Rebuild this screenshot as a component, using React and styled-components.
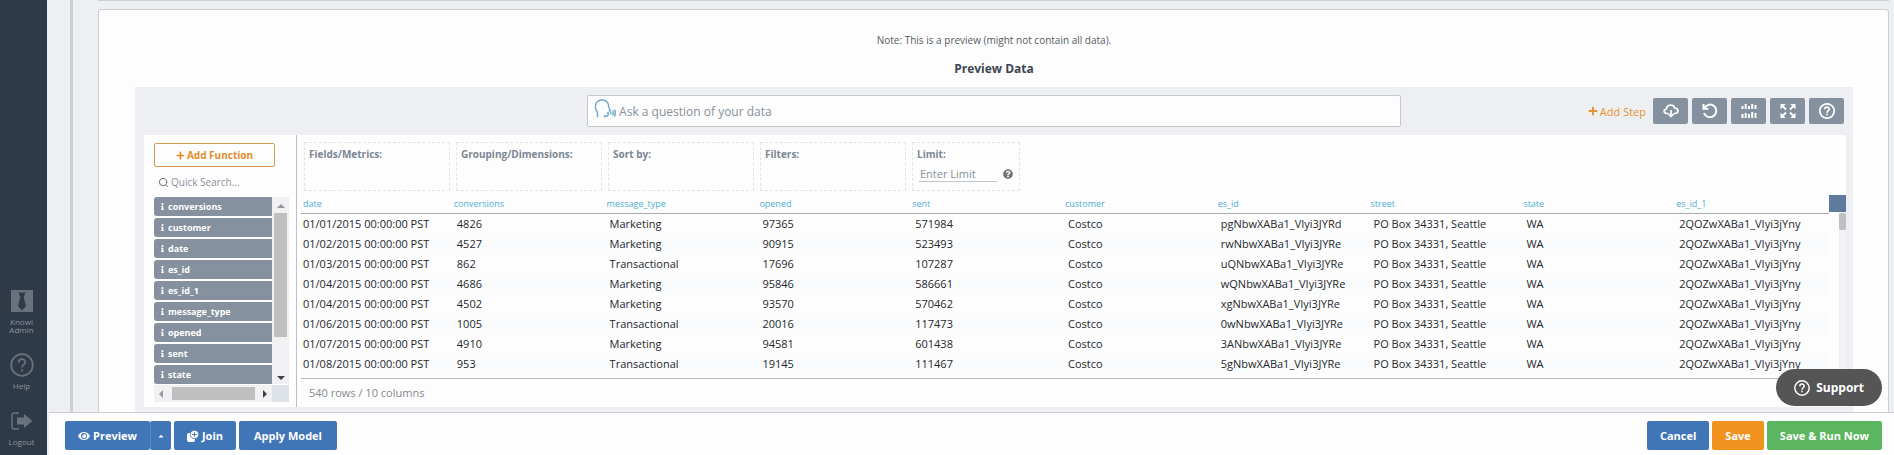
import React from "react";
import styled, { createGlobalStyle, css } from "styled-components";
import {
  FaPlus,
  FaEye,
  FaCaretUp,
  FaInfo,
  FaQuestionCircle,
} from "react-icons/fa";
import { Search } from "lucide-react";

const functions = [
  "conversions",
  "customer",
  "date",
  "es_id",
  "es_id_1",
  "message_type",
  "opened",
  "sent",
  "state",
];

const dropZones = [
  "Fields/Metrics:",
  "Grouping/Dimensions:",
  "Sort by:",
  "Filters:",
];

const columns = [
  "date",
  "conversions",
  "message_type",
  "opened",
  "sent",
  "customer",
  "es_id",
  "street",
  "state",
  "es_id_1",
];

const row = (day, conversions, type, opened, sent, id) => [
  `01/${day}/2015 00:00:00 PST`,
  conversions,
  type,
  opened,
  sent,
  "Costco",
  id,
  "PO Box 34331, Seattle",
  "WA",
  "2QOZwXABa1_VIyi3jYny",
];

const rows = [
  row("01", 4826, "Marketing", 97365, 571984, "pgNbwXABa1_VIyi3JYRd"),
  row("02", 4527, "Marketing", 90915, 523493, "rwNbwXABa1_VIyi3JYRe"),
  row("03", 862, "Transactional", 17696, 107287, "uQNbwXABa1_VIyi3JYRe"),
  row("04", 4686, "Marketing", 95846, 586661, "wQNbwXABa1_VIyi3JYRe"),
  row("04", 4502, "Marketing", 93570, 570462, "xgNbwXABa1_VIyi3JYRe"),
  row("06", 1005, "Transactional", 20016, 117473, "0wNbwXABa1_VIyi3JYRe"),
  row("07", 4910, "Marketing", 94581, 601438, "3ANbwXABa1_VIyi3JYRe"),
  row("08", 953, "Transactional", 19145, 111467, "5gNbwXABa1_VIyi3JYRe"),
];

const TieIcon = () => (
  <svg width="22" height="24" viewBox="0 0 22 24">
    <path d="M0 1h22v22H0z" fill="currentColor" />
    <path d="M7.500 3.500h7l-1.800 4.500 2.300 9-4 4.500-4-4.500L9.300 8z" fill="#2f3a48" />
  </svg>
);

const HelpIcon = ({ size = 24, weight = 1.8 }) => (
  <svg
    width={size}
    height={size}
    viewBox="0 0 24 24"
    fill="none"
    stroke="currentColor"
    strokeWidth={weight}
  >
    <circle cx="12" cy="12" r="10.800" />
    <path d="M8.700 9.500c0-4.500 6.600-4.300 6.600-.4 0 2.500-3.300 2.700-3.300 5.400" />
    <path d="M12 16.300v2.200" />
  </svg>
);

const LogoutIcon = () => (
  <svg width="22" height="24" viewBox="0 -3 22 24">
    <path
      d="M8 1H3Q1 1 1 3v12q0 2 2 2h5"
      fill="none"
      stroke="currentColor"
      strokeWidth="1.500"
    />
    <path d="M6 5.500h7V2l8.500 7L13 16v-3.500H6z" fill="currentColor" />
  </svg>
);

const SpeakIcon = () => (
  <svg
    width="22"
    height="20"
    viewBox="0 0 22 20"
    fill="none"
    stroke="#6fa8cf"
    strokeWidth="1.400"
  >
    <path d="M3.500 18.500v-5C-.5 8 1.500 1 8 1c5 0 7 3.500 6.500 7l1.800 3.500-1.600.5M10.500 18.500v-1.500h3.200l.8-3h-1.700" />
    <path d="M16.800 12.500v3M18.700 11.500q1 2.500 0 5M20.600 10.500q1.400 3.500 0 7" />
  </svg>
);

const CloudIcon = () => (
  <svg
    width="16"
    height="14"
    viewBox="0 0 16 14"
    fill="none"
    stroke="#fff"
    strokeWidth="1.700"
  >
    <path d="M5.500 9.500H4C.5 9.500.2 5.500 3.400 5 3.600.3 10.800-.2 11.600 4c4.200.2 4.500 5.500.4 5.500h-1.500M8 6v6M5.500 10L8 12.600l2.500-2.600" />
  </svg>
);

const UndoIcon = () => (
  <svg
    width="16"
    height="16"
    viewBox="0 0 16 16"
    fill="none"
    stroke="#fff"
    strokeWidth="2"
  >
    <path d="M2.500 4.700A6.300 6.300 0 1 1 2 10" />
    <path d="M1.500 1v4.800h4.800" />
  </svg>
);

const BarsIcon = () => (
  <svg width="16" height="16" viewBox="0 0 16 16" stroke="#fff" strokeWidth="2">
    <path d="M1.500 3V6M4.700 1v5M8 3v3M11.200 1v5M14.500 2v4M1.500 11V15M4.700 10v5M8 11v4M11.200 9v6M14.500 10v5" />
  </svg>
);

const ExpandIcon = () => (
  <svg width="16" height="16" viewBox="0 0 16 16">
    <path
      d="M.5 1h5.200L.5 6.200zM15.500 1v5.200L10.300 1zM.5 15V9.800L5.700 15zM15.500 15h-5.200l5.200-5.200z"
      fill="#fff"
    />
    <path
      d="M2 2.500l4 4M14 2.500l-4 4M2 13.500l4-4M14 13.500l-4-4"
      stroke="#fff"
      strokeWidth="1.800"
    />
  </svg>
);

const JoinIcon = () => (
  <svg width="12" height="12" viewBox="0 0 12 12">
    <rect y="3" width="8" height="9" rx="2" fill="#fff" />
    <circle
      cx="7.500"
      cy="4.500"
      r="4.200"
      fill="#fff"
      stroke="#4076b8"
      strokeWidth=".8"
    />
    <path d="M7.500 2.300v4.400M5.300 4.500h4.400" stroke="#4076b8" />
  </svg>
);

const App = () => {
  return (
    <>
      <GlobalStyle />
      <Shell>
        <Sidebar>
          <SideLink href="#admin">
            <TieIcon />
            <span>
              Knowi
              <br />
              Admin
            </span>
          </SideLink>
          <SideLink href="#help">
            <HelpIcon />
            <span>Help</span>
          </SideLink>
          <SideLink href="#logout">
            <LogoutIcon />
            <span>Logout</span>
          </SideLink>
        </Sidebar>

        <Page>
          <Content>
            <PreviousEdge />
            <Card>
              <Note>Note: This is a preview (might not contain all data).</Note>
              <Title>Preview Data</Title>
              <Widget>
                <Toolbar>
                  <SearchBox>
                    <SpeakIcon />
                    <input
                      type="text"
                      aria-label="Ask a question of your data"
                      placeholder="Ask a question of your data"
                    />
                  </SearchBox>
                  <Actions>
                    <AddStep>
                      <FaPlus size={10} /> Add Step
                    </AddStep>
                    <IconButton aria-label="Download">
                      <CloudIcon />
                    </IconButton>
                    <IconButton aria-label="Reset">
                      <UndoIcon />
                    </IconButton>
                    <IconButton aria-label="Charts">
                      <BarsIcon />
                    </IconButton>
                    <IconButton aria-label="Full screen">
                      <ExpandIcon />
                    </IconButton>
                    <IconButton aria-label="Help">
                      <HelpIcon size={16} weight={2.5} />
                    </IconButton>
                  </Actions>
                </Toolbar>

                <Workspace>
                  <FunctionPanel>
                    <AddFunction>
                      <FaPlus size={9} /> Add Function
                    </AddFunction>
                    <QuickSearch>
                      <Search size={11} />
                      <input
                        type="text"
                        aria-label="Quick Search"
                        placeholder="Quick Search..."
                      />
                    </QuickSearch>
                    <ListFrame>
                      <FunctionList>
                        {functions.map((name) => (
                          <li key={name}>
                            <FaInfo size={7} />
                            {name}
                          </li>
                        ))}
                      </FunctionList>
                      <ScrollY>
                        <Arrow $dir="up" />
                        <i />
                        <Arrow $dir="down" />
                      </ScrollY>
                      <ScrollX>
                        <Arrow $dir="left" />
                        <i />
                        <Arrow $dir="right" />
                      </ScrollX>
                      <Corner />
                    </ListFrame>
                  </FunctionPanel>

                  <DataPanel>
                    <Builder>
                      {dropZones.map((zone) => (
                        <Zone key={zone}>{zone}</Zone>
                      ))}
                      <Zone $narrow>
                        <label htmlFor="limit">Limit:</label>
                        <LimitRow>
                          <input
                            id="limit"
                            type="text"
                            placeholder="Enter Limit"
                          />
                          <FaQuestionCircle size={10} />
                        </LimitRow>
                      </Zone>
                    </Builder>

                    <Grid>
                      <TableWrap>
                        <Table>
                          <thead>
                            <tr>
                              {columns.map((name) => (
                                <th key={name}>{name}</th>
                              ))}
                            </tr>
                          </thead>
                          <tbody>
                            {rows.map((cells, i) => (
                              <tr key={i}>
                                {cells.map((cell, j) => (
                                  <td key={j}>{cell}</td>
                                ))}
                              </tr>
                            ))}
                          </tbody>
                        </Table>
                      </TableWrap>
                      <GridScroll>
                        <button aria-label="Choose columns" />
                        <i />
                      </GridScroll>
                    </Grid>
                    <Count>540 rows / 10 columns</Count>
                  </DataPanel>
                </Workspace>
              </Widget>
            </Card>
            <Support>
              <HelpIcon size={16} weight={2.2} /> Support
            </Support>
          </Content>

          <Footer>
            <SplitButton>
              <Button>
                <FaEye size={12} /> Preview
              </Button>
              <Button $caret aria-label="More preview options">
                <FaCaretUp size={8} />
              </Button>
            </SplitButton>
            <Button>
              <JoinIcon /> Join
            </Button>
            <Button $wide>Apply Model</Button>
            <Spacer />
            <Button>Cancel</Button>
            <Button $color="#f1921f">Save</Button>
            <Button $color="#5cb660">Save &amp; Run Now</Button>
          </Footer>
        </Page>
      </Shell>
    </>
  );
};

export default App;

const GlobalStyle = createGlobalStyle`
  * {
    box-sizing: border-box;
  }
  body {
    margin: 0;
    background: #eeeff3;
    font-family: "Open Sans", "Noto Sans", sans-serif;
    font-size: 11px;
  }
  button,
  input {
    font: inherit;
    margin: 0;
    padding: 0;
    border: none;
    background: none;
  }
  input {
    outline: none;
    min-width: 0;
  }
  button {
    cursor: pointer;
  }
  input::placeholder {
    color: #88909a;
    opacity: 1;
  }
`;

const Shell = styled.div`
  display: flex;
  height: 100vh;
`;

const Sidebar = styled.nav`
  flex: none;
  width: 47px;
  padding: 0 4px 9px 0;
  display: flex;
  flex-direction: column;
  justify-content: flex-end;
  gap: 19px;
  background: #2f3a48;
`;

const SideLink = styled.a`
  display: flex;
  flex-direction: column;
  align-items: center;
  gap: 5px;
  color: #69727c;
  font-size: 8px;
  line-height: 8px;
  text-align: center;
  text-decoration: none;
  span {
    color: #8b939c;
  }
`;

const Page = styled.div`
  flex: 1;
  min-width: 0;
  display: flex;
  flex-direction: column;
`;

const Content = styled.main`
  position: relative;
  flex: 1;
  min-height: 0;
  margin-left: 23px;
  padding: 0 5px 0 25px;
  border-left: 3px solid #cccfd5;
  overflow: hidden;
  display: flex;
  flex-direction: column;
  gap: 8px;
`;

const PreviousEdge = styled.div`
  height: 1px;
  background: #cdcfd5;
`;

const Card = styled.section`
  flex: 1;
  min-width: 0;
  padding: 20px 35px 0 36px;
  display: flex;
  flex-direction: column;
  background: #fdfdfd;
  border: 1px solid #cdcfd5;
  border-bottom: none;
  border-radius: 3px 3px 0 0;
`;

const Note = styled.p`
  margin: 0;
  color: #555b63;
  font-size: 10px;
  line-height: 20px;
  text-align: center;
`;

const Title = styled.h2`
  margin: 9px 0 8px;
  color: #3d4652;
  font-size: 12px;
  line-height: 20px;
  text-align: center;
`;

const Widget = styled.div`
  flex: 1;
  display: flex;
  flex-direction: column;
  background: #edeff3;
`;

const Toolbar = styled.div`
  height: 48px;
  display: grid;
  grid-template-columns: minmax(0, 1.8fr) minmax(0, 1fr);
  padding-left: calc(100% * 10 / 38);
  align-items: center;
`;

const SearchBox = styled.div`
  height: 32px;
  padding: 0 6px;
  display: flex;
  align-items: center;
  gap: 3px;
  background: #fdfdfd;
  border: 1px solid #c2c8ce;
  border-radius: 2px;
  font-size: 12px;
  svg {
    margin-bottom: 4px;
  }
  input {
    flex: 1;
  }
`;

const Actions = styled.div`
  display: flex;
  align-items: center;
  justify-content: flex-end;
  gap: 4px;
  padding-right: 9px;
`;

const AddStep = styled.button`
  display: flex;
  align-items: center;
  gap: 2px;
  margin-right: 3px;
  color: #e8922f;
  white-space: nowrap;
`;

const IconButton = styled.button`
  width: 35px;
  height: 26px;
  display: flex;
  align-items: center;
  justify-content: center;
  color: #fff;
  background: #85919e;
  border-radius: 2px;
`;

const Workspace = styled.div`
  display: flex;
  margin: 0 7px 0 9px;
  background: #fdfdfd;
`;

const FunctionPanel = styled.aside`
  flex: none;
  width: 153px;
  padding: 8px 7px 4px 10px;
  border-right: 1px solid #bcbfc4;
`;

const AddFunction = styled.button`
  display: flex;
  align-items: center;
  justify-content: center;
  gap: 2px;
  width: 121px;
  height: 24px;
  color: #e08d2e;
  font-size: 10px;
  font-weight: 700;
  border: 1px solid #d39a55;
  border-radius: 2px;
`;

const QuickSearch = styled.div`
  display: flex;
  align-items: center;
  gap: 2px;
  height: 30px;
  padding-left: 4px;
  color: #5e6872;
  font-size: 10px;
  input {
    width: 100px;
  }
`;

const ListFrame = styled.div`
  display: grid;
  grid-template-columns: 118px 17px;
  grid-template-rows: auto 17px;
  row-gap: 1px;
`;

const FunctionList = styled.ul`
  margin: 0;
  padding: 0;
  list-style: none;
  display: flex;
  flex-direction: column;
  gap: 2px;
  li {
    display: flex;
    align-items: center;
    gap: 2px;
    height: 19px;
    padding: 0 0 1px 5px;
    color: #fff;
    font-size: 9px;
    font-weight: 700;
    background: #85919e;
    border-radius: 3px 0 0 3px;
  }
`;

const ScrollY = styled.div`
  display: flex;
  flex-direction: column;
  align-items: center;
  justify-content: space-between;
  padding: 7px 0 4px;
  background: #f1f1f4;
  i {
    width: 13px;
    height: 124px;
    margin-bottom: auto;
    margin-top: 5px;
    background: #bfbfc0;
  }
`;

const ScrollX = styled.div`
  display: flex;
  align-items: center;
  justify-content: space-between;
  padding: 0 5px;
  background: #f1f1f4;
  i {
    width: 83px;
    height: 13px;
    background: #bfbfc0;
  }
`;

const Arrow = styled.span`
  border: 4px solid transparent;
  ${({ $dir }) =>
    ({
      up: css`
        border-top: none;
        border-bottom-color: #95989c;
      `,
      down: css`
        border-bottom: none;
        border-top-color: #3e4043;
      `,
      left: css`
        border-left: none;
        border-right-color: #95989c;
      `,
      right: css`
        border-right: none;
        border-left-color: #3e4043;
      `,
    })[$dir]}
`;

const Corner = styled.div`
  background: #dce2e7;
`;

const DataPanel = styled.div`
  flex: 1;
  min-width: 0;
  padding: 7px 0 0 4px;
`;

const Builder = styled.div`
  display: flex;
  gap: 6px;
  padding-left: 3px;
`;

const Zone = styled.div`
  width: ${({ $narrow }) => ($narrow ? "108px" : "146px")};
  height: 49px;
  padding: 3px 4px;
  color: #7c8794;
  font-size: 10px;
  font-weight: 700;
  line-height: 16px;
  border: 1px dashed #e1e4e8;
  label {
    display: block;
  }
`;

const LimitRow = styled.div`
  display: flex;
  align-items: center;
  gap: 6px;
  padding: 3px 0 0 2px;
  color: #6f7479;
  input {
    width: 78px;
    height: 17px;
    padding-left: 1px;
    font-size: 11px;
    font-weight: 400;
    border-bottom: 1px solid #bfc7cd;
  }
`;

const Grid = styled.div`
  display: flex;
  margin-top: 4px;
  border-bottom: 1px solid #b6b8ba;
`;

const TableWrap = styled.div`
  flex: 1;
  min-width: 0;
  padding-bottom: 4px;
`;

const Table = styled.table`
  width: 100%;
  table-layout: fixed;
  border-collapse: collapse;
  color: #25282c;
  white-space: nowrap;
  th {
    height: 18px;
    padding: 0;
    color: #4fadd6;
    font-size: 9px;
    font-weight: 400;
    line-height: 16px;
    text-align: left;
    border-bottom: 1px solid #a9abad;
  }
  td {
    height: 20px;
    padding: 0 0 0 3px;
    line-height: 20px;
  }
  th:first-child,
  td:first-child {
    padding-left: 2px;
  }
  tbody tr:nth-child(even) {
    background: #fafbfc;
  }
`;

const GridScroll = styled.div`
  width: 17px;
  display: flex;
  flex-direction: column;
  align-items: flex-end;
  background: linear-gradient(to left, #f1f2f5 7px, transparent 7px);
  button {
    width: 17px;
    height: 17px;
    background: #5f7b9b;
  }
  i {
    width: 7px;
    height: 17px;
    margin-top: 1px;
    background: #bdbfc2;
    border-radius: 2px;
  }
`;

const Count = styled.div`
  padding: 0 8px;
  color: #83888e;
  line-height: 28px;
`;

const Support = styled.button`
  position: absolute;
  right: 12px;
  bottom: 6px;
  display: flex;
  align-items: center;
  gap: 6px;
  height: 37px;
  padding: 0 18px;
  color: #fff;
  font-size: 12px;
  font-weight: 700;
  background: #555556;
  border-radius: 19px;
`;

const Footer = styled.footer`
  flex: none;
  height: 43px;
  margin-left: 2px;
  padding: 3px 12px 0 16px;
  display: flex;
  align-items: center;
  gap: 3px;
  background: #fdfdfd;
  border-top: 1px solid #cdcfd5;
`;

const Button = styled.button`
  display: flex;
  align-items: center;
  justify-content: center;
  gap: 3px;
  height: 29px;
  padding: ${({ $caret, $wide }) =>
    $caret ? "0 6px" : $wide ? "0 15px" : "0 13px"};
  color: #fff;
  font-size: 11px;
  font-weight: 700;
  white-space: nowrap;
  background: ${({ $color }) => $color || "#4076b8"};
  border-radius: 2px;
`;

const SplitButton = styled.div`
  display: flex;
  button + button {
    border-left: 1px solid #6288b8;
  }
`;

const Spacer = styled.div`
  flex: 1;
`;
